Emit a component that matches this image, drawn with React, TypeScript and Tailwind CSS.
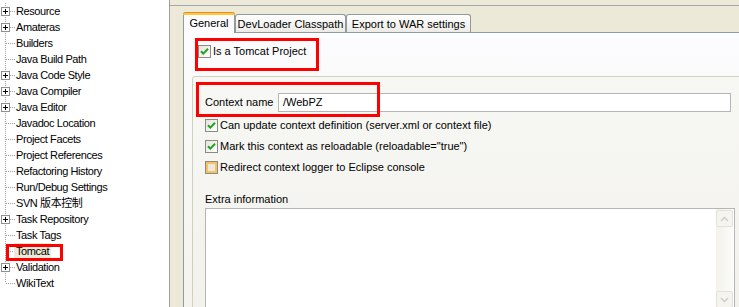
import React from "react";

const items: [string, boolean][] = [
  ["Resource", true],
  ["Amateras", true],
  ["Builders", false],
  ["Java Build Path", false],
  ["Java Code Style", true],
  ["Java Compiler", true],
  ["Java Editor", true],
  ["Javadoc Location", false],
  ["Project Facets", false],
  ["Project References", false],
  ["Refactoring History", false],
  ["Run/Debug Settings", false],
  ["SVN 版本控制", false],
  ["Task Repository", true],
  ["Task Tags", false],
  ["Tomcat", false],
  ["Validation", true],
  ["WikiText", false],
];

function Connector({ expander, last }: { expander: boolean; last: boolean }) {
  return (
    <svg width="16" height="16" className="shrink-0" shapeRendering="crispEdges">
      <line x1="5.5" y1="0" x2="5.5" y2={last ? 8 : 16} stroke="#a0a0a0" strokeDasharray="1 1" />
      <line x1="6" y1="8.5" x2="16" y2="8.5" stroke="#a0a0a0" strokeDasharray="1 1" />
      {expander && (
        <g>
          <rect x="1.5" y="4.5" width="8" height="8" fill="#fff" stroke="#919191" />
          <line x1="3" y1="8.5" x2="8" y2="8.5" stroke="#000" />
          <line x1="5.5" y1="6" x2="5.5" y2="11" stroke="#000" />
        </g>
      )}
    </svg>
  );
}

function Check({ checked, hot }: { checked?: boolean; hot?: boolean }) {
  return (
    <div className="w-[13px] h-[13px] shrink-0 border border-[#8a8a86] bg-linear-to-br from-[#e4e3dc] to-[#ffffff] flex items-center justify-center">
      {hot && (
        <div className="w-[11px] h-[11px] border-2 border-[#f9c15d] bg-[#ebe9df]" />
      )}
      {checked && (
        <svg width="11" height="11" viewBox="0 0 11 11">
          <path d="M2 5.2 L4.3 7.6 L9 2.8" fill="none" stroke="#21a121" strokeWidth="2" />
        </svg>
      )}
    </div>
  );
}

function Tab({ label, width, selected }: { label: string; width: number; selected?: boolean }) {
  if (selected) {
    return (
      <div
        className="relative z-10 -mb-px h-[21px] border-x border-[#919b9c] bg-[#fcfcfe] rounded-t-[3px] flex items-start justify-center"
        style={{ width }}
      >
        <div className="absolute left-[-1px] right-[-1px] top-0 h-[3px] rounded-t-[3px] bg-[#ffc83c] border-t border-[#e68b2c]" />
        <span className="pt-[5px]">{label}</span>
      </div>
    );
  }
  return (
    <div
      className="h-[18px] border border-b-0 border-[#919b9c] rounded-t-[3px] bg-linear-to-b from-[#ffffff] to-[#ecebe6] flex items-center justify-center"
      style={{ width }}
    >
      <span className="pt-[1px]">{label}</span>
    </div>
  );
}

export default function App() {
  return (
    <div className="relative w-[739px] h-[307px] overflow-hidden flex bg-white text-black text-[11px] leading-[13px] font-[Liberation_Sans,Noto_Sans_CJK_SC,sans-serif]">
      {/* Left tree */}
      <div className="w-[170px] shrink-0 h-full bg-white border-r border-[#a0a0a0] pt-[3px]">
        {items.map(([name, exp], i) => (
          <div key={name} className="h-4 flex items-center">
            <Connector expander={exp} last={i === items.length - 1} />
            {name === "Tomcat" ? (
              <span className="-ml-[2px] px-[2px] bg-[#ece9d8] leading-4 tracking-[-0.4px]">{name}</span>
            ) : (
              <span className="leading-4 tracking-[-0.4px] whitespace-nowrap">{name}</span>
            )}
          </div>
        ))}
      </div>

      {/* Right area */}
      <div className="flex-1 h-full bg-[#ece9d8] pt-[5px] overflow-hidden">
        <div className="h-full border-t border-[#a7a6aa] pl-[13px] pt-[6px] flex flex-col">
          {/* Tabs */}
          <div className="flex items-end h-[20px]">
            <Tab label="General" width={52} selected />
            <Tab label="DevLoader Classpath" width={111} />
            <Tab label="Export to WAR settings" width={125} />
          </div>
          {/* Body */}
          <div className="flex-1 w-[600px] border-l border-t border-[#919b9c] bg-linear-to-b from-[#fcfcfe] to-[#f1f0ea]">
            <div className="mt-[10px] h-4 pl-[14px] flex items-center gap-[1px]">
              <Check checked />
              <span className="ml-[1px]">Is a Tomcat Project</span>
            </div>
            <div className="mt-[17px] ml-[8px] w-[570px] h-[300px] border border-[#d0d0bf] rounded-[3px] bg-linear-to-b from-[#f7f7f4] to-[#f1f0ea] pl-[12px] pt-[16px]">
              <div className="flex items-center h-[19px]">
                <span className="w-[73px] shrink-0">Context name</span>
                <div className="w-[453px] h-[19px] border border-[#b5b5b5] bg-white flex items-center pl-[4px]">
                  /WebPZ
                </div>
              </div>
              <div className="mt-[3px] flex flex-col">
                <div className="h-[21px] flex items-center gap-[2px]">
                  <Check checked />
                  <span>Can update context definition (server.xml or context file)</span>
                </div>
                <div className="h-[21px] flex items-center gap-[2px]">
                  <Check checked />
                  <span>Mark this context as reloadable (reloadable="true")</span>
                </div>
                <div className="h-[21px] flex items-center gap-[2px]">
                  <Check hot />
                  <span>Redirect context logger to Eclipse console</span>
                </div>
              </div>
              <div className="mt-[15px] h-[13px]">Extra information</div>
              <div className="mt-[2px] w-[530px] h-[102px] border border-[#b5b5b5] bg-white flex justify-end">
                <div className="w-[17px] h-full mr-[1px] bg-linear-to-r from-[#f3f2ec] to-[#fbfbf9] flex flex-col justify-between py-[1px]">
                  <div className="h-[17px] border border-[#e3e2d8] rounded-[2px] bg-[#f5f4ef] flex items-center justify-center">
                    <svg width="9" height="6" viewBox="0 0 9 6">
                      <path d="M1 5 L4.5 1.5 L8 5" fill="none" stroke="#cfcec4" strokeWidth="1.5" />
                    </svg>
                  </div>
                  <div className="h-[17px] border border-[#e3e2d8] rounded-[2px] bg-[#f5f4ef] flex items-center justify-center">
                    <svg width="9" height="6" viewBox="0 0 9 6">
                      <path d="M1 1 L4.5 4.5 L8 1" fill="none" stroke="#cfcec4" strokeWidth="1.5" />
                    </svg>
                  </div>
                </div>
              </div>
            </div>
          </div>
        </div>
      </div>

      {/* Red annotation boxes */}
      <div className="absolute left-[6px] top-[244px] w-[57px] h-[17px] border-[3px] border-[#ff0000]" />
      <div className="absolute left-[195px] top-[38px] w-[124px] h-[33px] border-[3px] border-[#ff0000]" />
      <div className="absolute left-[196px] top-[82px] w-[184px] h-[35px] border-[3px] border-[#ff0000]" />
    </div>
  );
}
